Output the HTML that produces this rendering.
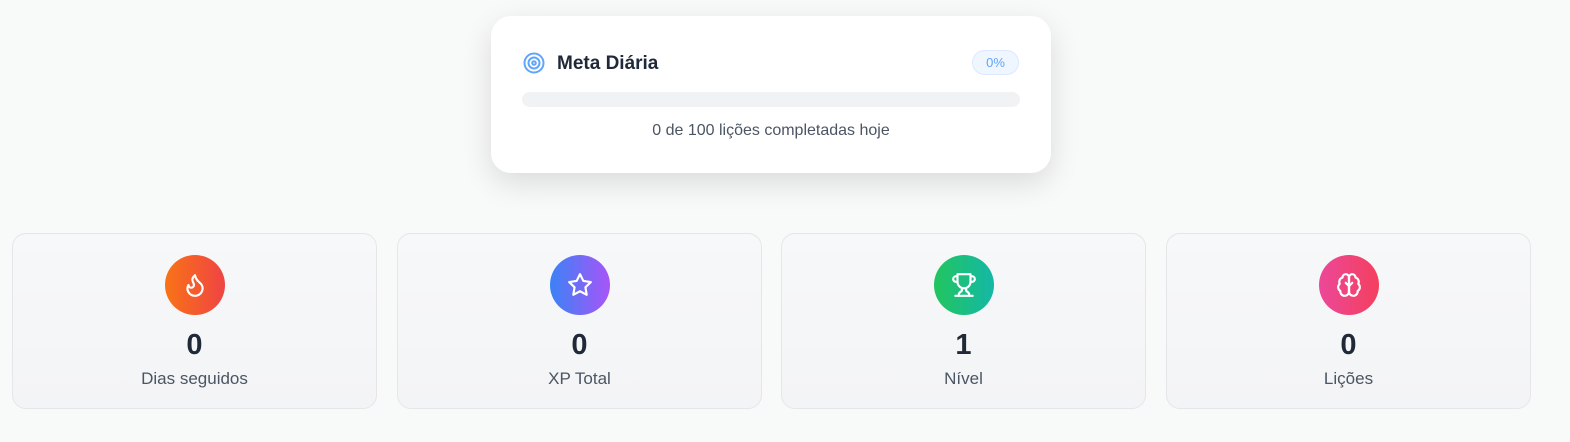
<!DOCTYPE html>
<html><head><meta charset="utf-8"><style>
body{margin:0;width:1570px;height:442px;background:#f8f9f9;font-family:"Liberation Sans",sans-serif;position:relative;overflow:hidden}
.top{position:absolute;left:491px;top:16px;width:560px;height:157px;background:#fff;border-radius:20px;box-shadow:0 10px 30px rgba(0,0,0,.12)}
.title{position:absolute;left:66px;top:37px;font-size:19px;font-weight:bold;color:#1f2937}
.tgt{position:absolute;left:32px;top:36px}
.pill{position:absolute;left:481px;top:34px;width:47px;height:25px;border:1px solid #dbeafe;background:#eff6ff;border-radius:13px;color:#60a5fa;font-size:13px;text-align:center;line-height:24px;box-sizing:border-box}
.bar{position:absolute;left:31px;top:76px;width:498px;height:15px;background:#f1f2f4;border-radius:8px}
.sub{position:absolute;left:0;width:560px;top:106px;text-align:center;font-size:16px;color:#4b5563}
.card{position:absolute;top:233px;width:365px;height:176px;border:1px solid #e4e6ea;border-radius:14px;background:linear-gradient(180deg,#f7f8f9,#f3f4f6);box-sizing:border-box;text-align:center}
.ic{position:absolute;left:152px;top:21px;width:60px;height:60px;border-radius:50%;display:flex;align-items:center;justify-content:center}
.num{position:absolute;left:0;right:0;top:95px;font-size:29px;font-weight:bold;color:#1f2937}
.lbl{position:absolute;left:0;right:0;top:135px;font-size:17px;color:#4b5563}
</style></head><body>
<div class="top">
<svg class="tgt" width="22" height="22" viewBox="0 0 22 22" fill="none" stroke="#60a5fa" stroke-width="2"><circle cx="11" cy="11" r="9.5"/><circle cx="11" cy="11" r="5.5"/><circle cx="11" cy="11" r="1.8"/></svg>
<div class="title">Meta Diária</div>
<div class="pill">0%</div>
<div class="bar"></div>
<div class="sub">0 de 100 lições completadas hoje</div>
</div>
<div class="card" style="left:12px"><div class="ic" style="background:linear-gradient(90deg,#f97316,#ef4444)"><svg width="26" height="26" viewBox="0 0 24 24" fill="none" stroke="#fff" stroke-width="2" stroke-linecap="round" stroke-linejoin="round"><path d="M8.5 14.5A2.5 2.5 0 0 0 11 12c0-1.38-.5-2-1-3-1.07-2.14-.22-4.05 2-6 .5 2.5 2 4.9 4 6.5 2 1.6 3 3.5 3 5.5a7 7 0 1 1-14 0c0-1.150.43-2.29 1-3a2.5 2.5 0 0 0 2.5 2.5z"/></svg></div><div class="num">0</div><div class="lbl">Dias seguidos</div></div>
<div class="card" style="left:397px"><div class="ic" style="background:linear-gradient(90deg,#3b82f6,#a855f7)"><svg width="26" height="26" viewBox="0 0 24 24" fill="none" stroke="#fff" stroke-width="2" stroke-linejoin="round"><polygon points="12 2 15.09 8.26 22 9.27 17 14.14 18.18 21.02 12 17.77 5.82 21.02 7 14.14 2 9.27 8.91 8.26 12 2"/></svg></div><div class="num">0</div><div class="lbl">XP Total</div></div>
<div class="card" style="left:781px"><div class="ic" style="background:linear-gradient(90deg,#22c55e,#14b8a6)"><svg width="26" height="26" viewBox="0 0 24 24" fill="none" stroke="#fff" stroke-width="2" stroke-linecap="round" stroke-linejoin="round"><path d="M6 9H4.5a2.5 2.5 0 0 1 0-5H6M18 9h1.5a2.5 2.5 0 0 0 0-5H18M4 22h16M10 14.66V17c0 .55-.47.98-.97 1.21C7.85 18.75 7 20.24 7 22M14 14.66V17c0 .55.47.98.97 1.21C16.150 18.75 17 20.24 17 22M18 2H6v7a6 6 0 0 0 12 0V2z"/></svg></div><div class="num">1</div><div class="lbl">Nível</div></div>
<div class="card" style="left:1166px"><div class="ic" style="background:linear-gradient(90deg,#ec4899,#f43f5e)"><svg width="26" height="26" viewBox="0 0 24 24" fill="none" stroke="#fff" stroke-width="2" stroke-linecap="round" stroke-linejoin="round"><path d="M12 5a3 3 0 1 0-5.997.125 4 4 0 0 0-2.526 5.77 4 4 0 0 0 .556 6.588A4 4 0 1 0 12 18Z"/><path d="M12 5a3 3 0 1 1 5.997.125 4 4 0 0 1 2.526 5.77 4 4 0 0 1-.556 6.588A4 4 0 1 1 12 18Z"/><path d="M12 5v13M9 10l3 3 3-3"/></svg></div><div class="num">0</div><div class="lbl">Lições</div></div>
</body></html>
